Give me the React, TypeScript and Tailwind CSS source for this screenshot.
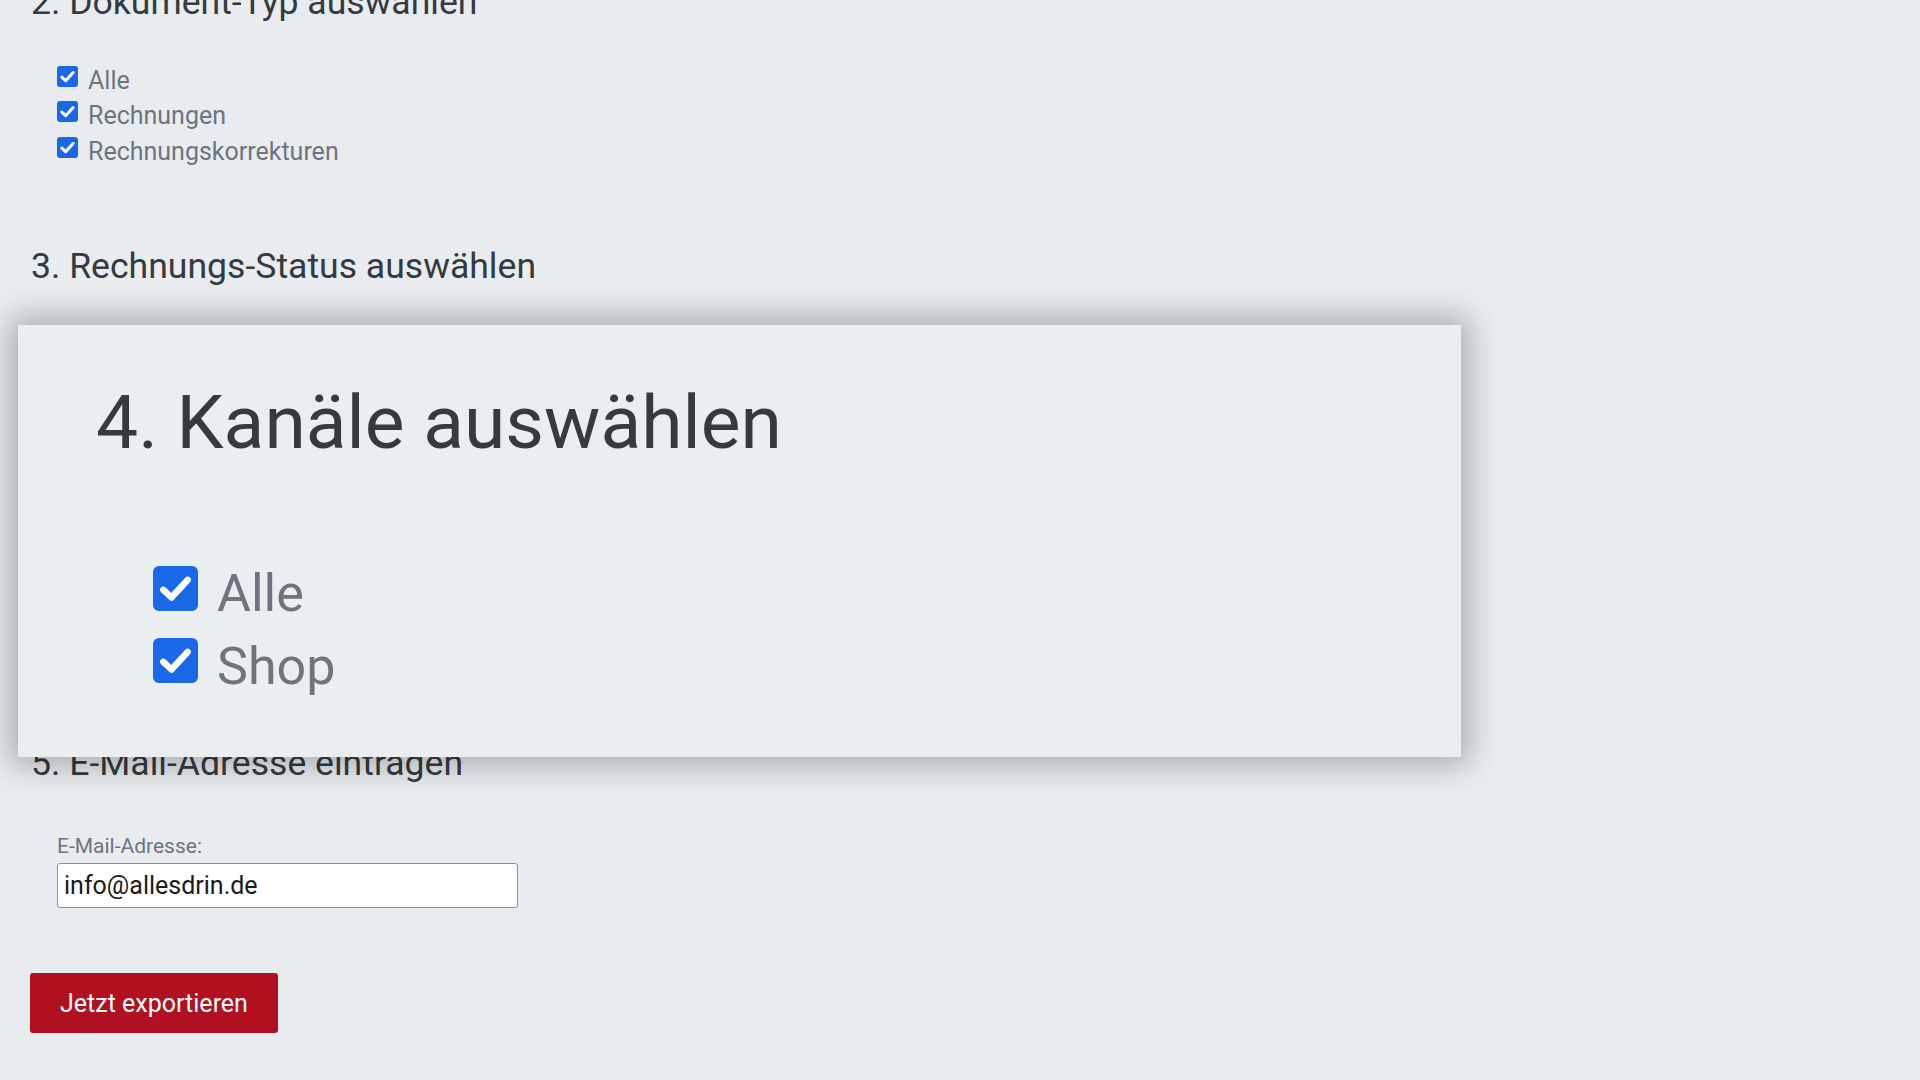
import React from 'react';

function Tick({ size }: { size: 'sm' | 'lg' }) {
  const box = size === 'lg' ? 'h-[45px] w-[45px] rounded-[6px]' : 'h-[21px] w-[21px] rounded-[3px]';
  return (
    <span className={`flex shrink-0 items-center justify-center bg-[#1a68e8] ${box}`} aria-hidden>
      <svg viewBox="0 0 20 20" className="h-full w-full">
        <polyline
          points="4.6,10.6 8.2,14 15.4,6.2"
          fill="none"
          stroke="#fff"
          strokeWidth="2.9"
          strokeLinecap="round"
          strokeLinejoin="round"
        />
      </svg>
    </span>
  );
}

function SmallOption({ label }: { label: string }) {
  return (
    <label className="flex h-[35.5px] items-start gap-[10px]">
      <span className="mt-[3px]">
        <Tick size="sm" />
      </span>
      <span className="text-[25px] leading-[35.5px] text-[#6c757d]">{label}</span>
    </label>
  );
}

function BigOption({ label }: { label: string }) {
  return (
    <label className="flex h-[72.7px] items-start gap-[19px]">
      <span className="mt-[7.4px]">
        <Tick size="lg" />
      </span>
      <span className="text-[52px] leading-[72.7px] text-[#6c757d]">{label}</span>
    </label>
  );
}

export default function App() {
  return (
    <div className="h-[1080px] w-[1920px] overflow-hidden bg-[#e9ecef] px-[31px] font-['Roboto','Liberation_Sans',sans-serif]">
      <div className="-mt-[19.5px]">
        <h2 className="text-[35.6px] leading-[1.2] text-[#343a40]">2. Dokument-Typ auswählen</h2>

        <div className="ml-[26px] mt-[39.5px] flex flex-col">
          <SmallOption label="Alle" />
          <SmallOption label="Rechnungen" />
          <SmallOption label="Rechnungskorrekturen" />
        </div>

        <h2 className="mt-[76px] text-[35.6px] leading-[1.2] text-[#343a40]">3. Rechnungs-Status auswählen</h2>

        {/* section 4 is shown enlarged, lying over the sections below */}
        <div className="relative h-[453.6px]">
          <div className="absolute left-[-13px] top-[36.8px] z-10 h-[432px] w-[1443px] bg-[#ebeef0] pl-[78px] pt-[52.4px] shadow-[0_0_30px_8px_rgba(0,0,0,0.28)]">
            <h2 className="text-[75px] leading-[1.2] text-[#343a40]">4. Kanäle auswählen</h2>
            <div className="ml-[57px] mt-[91.2px] flex flex-col">
              <BigOption label="Alle" />
              <BigOption label="Shop" />
            </div>
          </div>
        </div>

        <h2 className="text-[35.6px] leading-[1.2] text-[#343a40]">5. E-Mail-Adresse eintragen</h2>

        <div className="ml-[26px] mt-[50px] flex flex-col">
          <label className="text-[21px] leading-[24px] text-[#6c757d]">E-Mail-Adresse:</label>
          <input
            type="email"
            defaultValue="info@allesdrin.de"
            className="mt-[5.2px] h-[45px] w-[461px] rounded-[3px] border border-[#8d8f91] bg-white px-[6px] text-[25px] text-[#1a1a1a] outline-none"
          />
        </div>

        <button
          type="button"
          className="-ml-[1px] mt-[65px] h-[60px] w-[248px] rounded-[3px] bg-[#b0101f] text-[25px] text-white"
        >
          Jetzt exportieren
        </button>
      </div>
    </div>
  );
}
